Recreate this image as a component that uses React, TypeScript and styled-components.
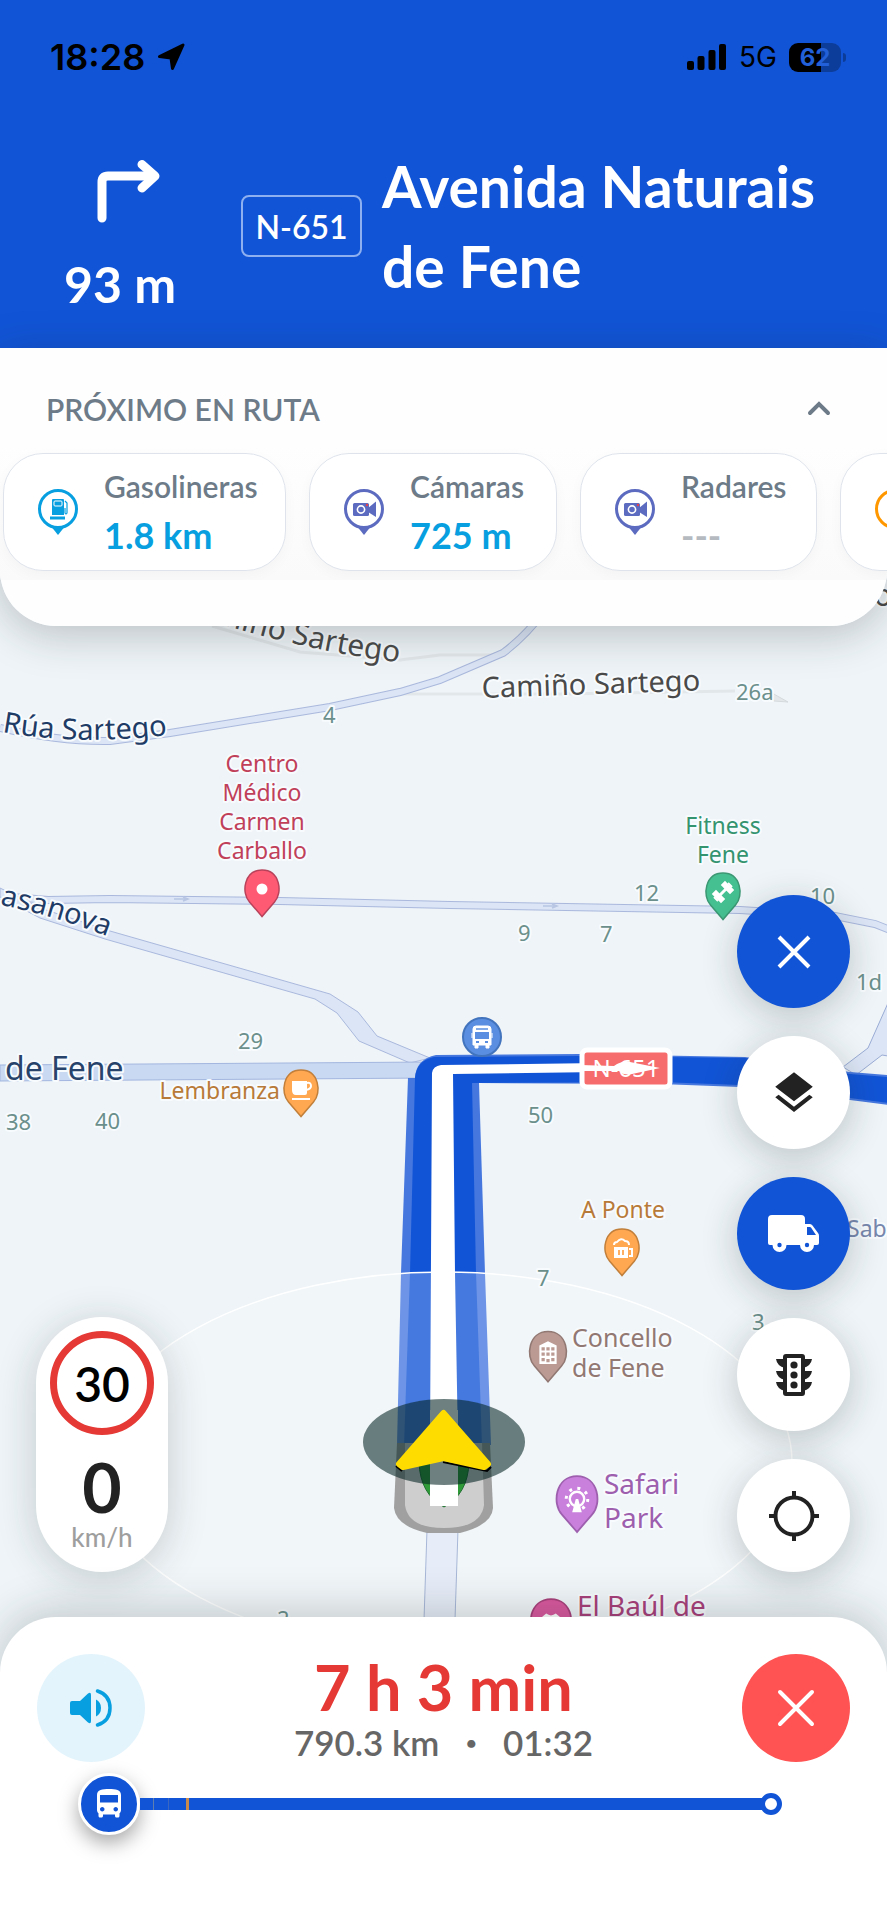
import React from "react";
import styled, { createGlobalStyle, css } from "styled-components";
import { MdDirectionsBus, MdLayers } from "react-icons/md";

const BLUE = "#1154d6";
const UI = `Lato, "Liberation Sans", sans-serif`;
const MAP = `"Noto Sans", "Open Sans", sans-serif`;

const Global = createGlobalStyle`
  *, *::before, *::after { box-sizing: border-box; }
  body { margin: 0; background: #fff; font-family: ${UI}; }
  button { font: inherit; border: 0; padding: 0; cursor: pointer; }
  h1, h2, p, ul { margin: 0; padding: 0; }
`;

const Page = styled.main`
  display: flex;
  flex-direction: column;
  min-height: 100vh;
  overflow: hidden;
`;

/* ---------- top ---------- */

const Top = styled.div`
  position: relative;
  z-index: 2;
`;

const Header = styled.header`
  background: ${BLUE};
  color: #fff;
  padding: 36px 46px 42px 50px;
`;

const StatusBar = styled.div`
  display: flex;
  align-items: center;
  justify-content: space-between;
  height: 42px;
  color: #000;
  font-family: Inter, sans-serif;
`;

const StatusGroup = styled.div`
  display: flex;
  align-items: center;
  gap: 12px;
`;

const Clock = styled.time`
  font-size: 36px;
  font-weight: 600;
`;

const Network = styled.span`
  font-size: 28px;
`;

const Battery = styled.span`
  position: relative;
  display: grid;
  place-items: center;
  width: 52px;
  height: 29px;
  border-radius: 9px;
  background: linear-gradient(90deg, #000 62%, rgba(0, 0, 0, 0.28) 62%);
  color: #2160d8;
  font-size: 24px;
  font-weight: 700;
  line-height: 29px;
  &::after {
    content: "";
    position: absolute;
    right: -5px;
    top: 10px;
    width: 3px;
    height: 9px;
    border-radius: 0 3px 3px 0;
    background: rgba(0, 0, 0, 0.28);
  }
`;

const Maneuver = styled.div`
  display: flex;
  align-items: center;
  margin-top: 68px;
  height: 160px;
`;

const Turn = styled.div`
  display: flex;
  flex-direction: column;
  align-items: center;
  gap: 24px;
  width: 140px;
  flex: none;
  padding-top: 28px;
`;

const TurnDistance = styled.span`
  font-size: 50px;
  font-weight: 700;
  line-height: 72px;
`;

const RoadBadge = styled.span`
  display: grid;
  place-items: center;
  flex: none;
  width: 121px;
  height: 62px;
  margin: 0 20px 0 51px;
  border: 2px solid #8fb0f0;
  border-radius: 8px;
  font-size: 32px;
  font-weight: 600;
`;

const Street = styled.h1`
  font-size: 57px;
  font-weight: 700;
  line-height: 80px;
`;

const RoutePanel = styled.section`
  height: 278px;
  overflow: hidden;
  background: #fefefe;
  border-radius: 0 0 56px 56px;
`;

const PanelShadow = styled.div`
  border-radius: 0 0 56px 56px;
  box-shadow: 0 8px 44px rgba(30, 40, 40, 0.26);
`;

const PanelHead = styled.div`
  display: flex;
  align-items: center;
  justify-content: space-between;
  height: 98px;
  padding: 24px 46px 0;
`;

const PanelTitle = styled.h2`
  color: #6d7b88;
  font-size: 30px;
  font-weight: 600;
`;

const Collapse = styled.button`
  display: grid;
  place-items: center;
  width: 44px;
  height: 44px;
  background: none;
`;

const Cards = styled.ul`
  display: flex;
  gap: 23px;
  padding: 7px 0 9px 3px;
  background: linear-gradient(#fefefe, #fafafa);
  overflow: hidden;
  list-style: none;
`;

const Card = styled.li<{ $width: number }>`
  display: flex;
  align-items: center;
  gap: 25px;
  flex: 0 0 ${(p) => p.$width}px;
  height: 118px;
  padding-left: 33px;
  background: #fff;
  border: 1px solid #dfe4ec;
  border-radius: 40px;
  box-shadow: 0 4px 14px rgba(0, 0, 0, 0.03);
`;

const CardText = styled.div`
  display: flex;
  flex-direction: column;
`;

const CardLabel = styled.span`
  color: #6d7b88;
  font-size: 30px;
  font-weight: 600;
  line-height: 46px;
`;

const CardValue = styled.span<{ $empty?: boolean }>`
  color: ${(p) => (p.$empty ? "#b4babf" : "#079fe0")};
  font-size: 36px;
  font-weight: 700;
  line-height: 52px;
`;

/* ---------- map ---------- */

const MapArea = styled.section`
  position: relative;
  flex: 1;
  min-height: 960px;
  margin: -60px 0;
  background: #eef4f8;
`;

const MapSvg = styled.svg`
  position: absolute;
  inset: 0;
  width: 100%;
  height: 100%;
  font-family: ${MAP};
`;

const Overlay = styled.div`
  position: absolute;
  inset: 0;
  display: flex;
  align-items: flex-end;
  justify-content: space-between;
  padding: 0 37px 105px 36px;
`;

const SpeedPill = styled.div`
  display: flex;
  flex-direction: column;
  align-items: center;
  width: 132px;
  height: 255px;
  padding-top: 14px;
  border-radius: 66px;
  background: #fff;
  box-shadow: 0 6px 40px rgba(30, 40, 40, 0.2);
`;

const SpeedLimit = styled.div`
  display: grid;
  place-items: center;
  width: 104px;
  height: 104px;
  border: 7px solid #e53935;
  border-radius: 50%;
  color: #000;
  font-size: 48px;
  font-weight: 600;
`;

const Speed = styled.div`
  color: #222;
  font-size: 68px;
  font-weight: 700;
  line-height: 68px;
  margin-top: 18px;
`;

const SpeedUnit = styled.div`
  color: #9e9e9e;
  font-size: 26px;
  font-weight: 500;
  line-height: 32px;
`;

const Tools = styled.div`
  display: flex;
  flex-direction: column;
  gap: 28px;
`;

const roundButton = css`
  display: grid;
  place-items: center;
  flex: none;
  border-radius: 50%;
`;

const Tool = styled.button<{ $active?: boolean }>`
  ${roundButton}
  width: 113px;
  height: 113px;
  background: ${(p) => (p.$active ? BLUE : "#fff")};
  color: ${(p) => (p.$active ? "#fff" : "#222")};
  box-shadow: 0 8px 36px rgba(30, 40, 40, 0.24);
`;

/* ---------- bottom sheet ---------- */

const Sheet = styled.footer`
  position: relative;
  z-index: 2;
  height: 303px;
  padding: 36px 37px 0;
  background: #fff;
  border-radius: 56px 56px 0 0;
  box-shadow: 0 -6px 44px rgba(30, 40, 40, 0.22);
`;

const Summary = styled.div`
  display: flex;
  align-items: center;
  justify-content: space-between;
`;

const SheetButton = styled.button<{ $danger?: boolean }>`
  ${roundButton}
  width: 108px;
  height: 108px;
  background: ${(p) => (p.$danger ? "#ff5252" : "#e4f4fc")};
  color: ${(p) => (p.$danger ? "#fff" : "#089fe0")};
`;

const Eta = styled.div`
  text-align: center;
`;

const Duration = styled.p`
  color: #e53935;
  font-size: 63px;
  font-weight: 700;
  line-height: 68px;
`;

const Details = styled.p`
  display: flex;
  align-items: center;
  justify-content: center;
  gap: 26px;
  color: #666;
  font-size: 35px;
  font-weight: 600;
  line-height: 42px;
`;

const Bullet = styled.span`
  font-size: 20px;
`;

const Progress = styled.div`
  display: flex;
  align-items: center;
  padding: 0 68px 0 41px;
  margin-top: 10px;
`;

const Vehicle = styled.span`
  ${roundButton}
  width: 62px;
  height: 62px;
  border: 3px solid #fff;
  background: ${BLUE};
  color: #fff;
  box-shadow: 0 8px 20px rgba(0, 0, 0, 0.35);
`;

const Track = styled.span`
  display: flex;
  flex: 1;
  height: 12px;
  margin-right: -2px;
  background: ${BLUE};
`;

const Tick = styled.span<{ $gap: number; $color: string; $w: number }>`
  width: ${(p) => p.$w}px;
  margin-left: ${(p) => p.$gap}px;
  background: ${(p) => p.$color};
`;

const Finish = styled.span`
  width: 22px;
  height: 22px;
  border: 5px solid ${BLUE};
  border-radius: 50%;
  background: #fff;
`;

/* ---------- icons ---------- */

const PinFrame = ({ color, children }: { color: string; children?: React.ReactNode }) => (
  <svg width="42" height="48" viewBox="0 0 42 48" fill="none" aria-hidden="true">
    <path d="M13 37 L21 47 L29 37 Z" fill={color} />
    <circle cx="21" cy="21" r="18.500" fill="#fff" stroke={color} strokeWidth="3" />
    {children}
  </svg>
);

const FuelIcon = () => (
  <PinFrame color="#079fe0">
    <path d="M15 12 q0 -1 1 -1 h10 q1 0 1 1 v15 h-12 z" fill="#079fe0" />
    <rect x="17" y="13" width="8" height="5" rx="1" stroke="#fff" strokeWidth="1" />
    <rect x="13" y="28.500" width="15" height="3" fill="#079fe0" />
    <path d="M28 13 l2 2 v10 q-1 2 -2 0 v-5" stroke="#079fe0" strokeWidth="1.200" />
  </PinFrame>
);

const CameraIcon = () => (
  <PinFrame color="#5c6bc0">
    <rect x="10" y="15" width="16" height="13" rx="1.500" fill="#5c6bc0" />
    <path d="M25 20 L33 13.500 V29 L25 24 Z" fill="#5c6bc0" />
    <circle cx="18" cy="21.500" r="3.600" stroke="#fff" strokeWidth="1.600" />
    <circle cx="24" cy="17" r="1.200" fill="#e5434f" />
  </PinFrame>
);

const AlertIcon = () => <PinFrame color="#ff9800" />;

const LocationArrow = () => (
  <svg width="28" height="28" viewBox="0 0 28 28" aria-hidden="true">
    <path d="M26 2 L15.500 25.500 L14 15 L2.500 13.500 Z" fill="#000" stroke="#000" strokeWidth="3" strokeLinejoin="round" />
  </svg>
);

const SignalIcon = () => (
  <svg width="40" height="27" viewBox="0 0 40 27" aria-hidden="true">
    <rect x="0" y="17" width="7" height="9" rx="2" />
    <rect x="10.500" y="12" width="7" height="14" rx="2" />
    <rect x="21.500" y="6" width="7" height="20" rx="2" />
    <rect x="32" y="0" width="7" height="26" rx="2" />
  </svg>
);

const TurnIcon = () => (
  <svg width="82" height="64" viewBox="-16 0 82 64" fill="none" stroke="#fff" strokeWidth="9" strokeLinecap="round" aria-hidden="true">
    <path d="M7 58 V22 Q7 16 13 16 H57" />
    <path d="M47 4.500 L60 16 L47 28" strokeLinejoin="round" />
  </svg>
);

const CrossIcon = ({ round }: { round?: boolean }) => (
  <svg width="40" height="40" viewBox="0 0 40 40" stroke="currentColor" strokeWidth="4" strokeLinecap={round ? "round" : "butt"} aria-hidden="true">
    <path d={round ? "M4 4 L36 36 M36 4 L4 36" : "M5 5 L35 35 M35 5 L5 35"} />
  </svg>
);

const TruckIcon = () => (
  <svg width="52" height="38" viewBox="0 0 52 38" fill="currentColor" aria-hidden="true">
    <path
      fillRule="evenodd"
      d="M4 0 H33 Q37 0 37 4 V9 H42 Q43.500 9 44.500 10.500 L50 18 Q51 19 51 21 V28 Q51 30 49 30 H46 A7 7 0 0 1 32 30 H18.500 A7 7 0 0 1 4.500 30 H2 Q0 30 0 28 V4 Q0 0 4 0 Z M39 12 V20 H48 L43 12.500 Q42.500 12 42 12 Z"
    />
    <circle cx="11.500" cy="30" r="2.200" fill={BLUE} />
    <circle cx="39" cy="30" r="2.200" fill={BLUE} />
  </svg>
);

const TrafficIcon = () => (
  <svg width="38" height="42" viewBox="0 0 38 42" fill="currentColor" aria-hidden="true">
    <path d="M1 5 H10 V14 Q2 12 1 5 Z M1 17 H10 V26 Q2 24 1 17 Z M1 28 H10 V37 Q2 35 1 28 Z" />
    <path d="M37 5 H28 V14 Q36 12 37 5 Z M37 17 H28 V26 Q36 24 37 17 Z M37 28 H28 V37 Q36 35 37 28 Z" />
    <rect x="10" y="2" width="18" height="38" rx="1" fill="#fff" stroke="currentColor" strokeWidth="4" />
    <circle cx="19" cy="11" r="3.600" />
    <circle cx="19" cy="21" r="3.600" />
    <circle cx="19" cy="31" r="3.600" />
  </svg>
);

const LocateIcon = () => (
  <svg width="52" height="52" viewBox="0 0 52 52" fill="none" stroke="currentColor" strokeWidth="4" aria-hidden="true">
    <circle cx="26" cy="26" r="18.500" />
    <path d="M26 1 V8 M26 44 V51 M1 26 H8 M44 26 H51" />
  </svg>
);

const VolumeIcon = () => (
  <svg width="44" height="40" viewBox="0 0 44 40" fill="currentColor" aria-hidden="true">
    <path d="M3 13 H11 L19 5.500 Q22 3.500 22 7 V33 Q22 36.500 19 34.500 L11 27 H3 Q1 27 1 25 V15 Q1 13 3 13 Z" />
    <path d="M27 11.500 Q32 14 32 20 Q32 26 27 28.500 Z" />
    <path d="M28.500 3 Q41 7 41 20 Q41 33 28.500 37" fill="none" stroke="currentColor" strokeWidth="3.500" strokeLinecap="round" />
  </svg>
);

/* ---------- map drawing ---------- */

type PinProps = { x: number; y: number; fill: string; stroke: string; scale?: number; children?: React.ReactNode };

const MapPin = ({ x, y, fill, stroke, scale = 1, children }: PinProps) => (
  <g transform={`translate(${x} ${y}) scale(${scale})`}>
    <path d="M0 27.500 L-12.500 13 C-21 4 -18 -19 0 -19 C18 -19 21 4 12.500 13 Z" fill={fill} stroke={stroke} strokeWidth="1.500" />
    {children}
  </g>
);

const Label = styled.text<{ $size: number; $color: string }>`
  font-size: ${(p) => p.$size}px;
  fill: ${(p) => p.$color};
  stroke: #f8fbfd;
  stroke-width: 4px;
  stroke-linejoin: round;
  paint-order: stroke;
`;

const HOUSE_NUMBERS: [number, number, string][] = [
  [323, 723, "4"],
  [736, 700, "26a"],
  [634, 901, "12"],
  [518, 941, "9"],
  [600, 942, "7"],
  [810, 904, "10"],
  [856, 990, "1d"],
  [238, 1049, "29"],
  [6, 1130, "38"],
  [95, 1129, "40"],
  [528, 1123, "50"],
  [537, 1286, "7"],
  [752, 1330, "3"],
  [277, 1627, "2"],
];

type Place = { x: number; y: number; lines: string[]; step: number; size: number; color: string; anchor?: "start" | "middle" | "end" };

const PLACES: Place[] = [
  { x: 262, y: 772, lines: ["Centro", "Médico", "Carmen", "Carballo"], step: 29, size: 23, color: "#c0405a", anchor: "middle" },
  { x: 723, y: 834, lines: ["Fitness", "Fene"], step: 29, size: 23, color: "#349470", anchor: "middle" },
  { x: 280, y: 1099, lines: ["Lembranza"], step: 29, size: 23, color: "#b87a38", anchor: "end" },
  { x: 623, y: 1218, lines: ["A Ponte"], step: 29, size: 23, color: "#b87a38", anchor: "middle" },
  { x: 572, y: 1347, lines: ["Concello", "de Fene"], step: 30, size: 25, color: "#927872" },
  { x: 604, y: 1494, lines: ["Safari", "Park"], step: 34, size: 28, color: "#9d5fae" },
  { x: 577, y: 1616, lines: ["El Baúl de"], step: 34, size: 28, color: "#a83f7b" },
  { x: 847, y: 1237, lines: ["Sab"], step: 29, size: 23, color: "#7787ad" },
];

const MapDrawing = () => (
  <MapSvg viewBox="0 566 887 1111" preserveAspectRatio="xMidYMid slice" role="img" aria-label="Mapa de Fene">
    <defs>
      <path id="lane-north" d="M179 611 Q243 632 300 645 T415 664" />
      <path id="lane-sartego" d="M2 732 Q85 747 182 733" />
      <path id="lane-casanova" d="M0 905 Q50 914 120 941" />
    </defs>

    {/* minor lanes */}
    <g fill="none" stroke="#e2e7ea" strokeWidth="3">
      <path d="M212 626 L300 652 L400 660 L440 655 H502" />
      <path d="M400 694 H560 L735 691" />
    </g>
    <path d="M772 693 L788 702 L774 701 Z" fill="#e3e7ea" stroke="#d5dadd" strokeWidth="1" />

    {/* local roads: an outline stroke below a slightly thinner fill */}
    {[
      ["#aab8dd", 8],
      ["#dbe5f5", 6],
    ].map(([stroke, width]) => (
      <g key={stroke} fill="none" stroke={stroke as string} strokeWidth={width}>
        <path d="M0 728 Q60 742 110 741 L170 733 L330 707 L400 692 L440 680 L503 653 Q526 636 545 610" />
        <path d="M0 896 L48 900 L110 899 L280 901 L450 905 L740 910 L835 916 L875 924 L890 930" />
      </g>
    ))}
    <path
      d="M0 888 L43 909 L110 931 L330 994 L358 1012 L377 1036 L430 1058 L410 1063 L359 1041 L337 1013 L315 999 L105 939 L40 918 L0 897 Z"
      fill="#dbe5f5"
      stroke="#aab8dd"
      strokeWidth="1"
    />
    <path d="M0 1065 L430 1062 V1078 L0 1081 Z" fill="#c9d9f1" stroke="#a3b6df" strokeWidth="1" />
    <path d="M843 1067 L868 1048 L888 1003 V1056 L882 1055 L856 1075 Z" fill="#dbe5f5" stroke="#9aabd4" strokeWidth="1" />
    <path d="M174 899 h14 m-5 -2 l5 2 l-5 2 M543 906 h14 m-5 -2 l5 2 l-5 2" fill="none" stroke="#b9c6e3" strokeWidth="1.500" />

    {/* road behind the vehicle */}
    <path d="M428 1500 L422 1680 H453 L459 1500 Z" fill="#e0e8f6" stroke="#8fa3cc" strokeWidth="1" />

    {/* active route */}
    <path d="M397 1445 L401 1273 L408 1078 L415 1078 Q416 1059 436 1055 L580 1054 L745 1057 L850 1072 L888 1075 V1105 L850 1100 L740 1087 L660 1084 L479 1083 L485 1273 L491 1445 Z" fill="#4577df" />
    <path d="M404 1445 L410 1273 L415 1078 Q416 1061 434 1057 L580 1056 L745 1058 L850 1074 L888 1077 V1103 L850 1098 L740 1085 L660 1082 L472 1083 L476 1273 L482 1445 Z" fill={BLUE} />
    <path d="M430 1445 L432 1073 Q433 1066 441 1065 L600 1063 V1072 L453 1074 L455 1273 L458 1445 Z" fill="#fff" />

    {/* accuracy area */}
    <ellipse cx="444" cy="1462" rx="348" ry="190" fill="#fff" fillOpacity="0.22" stroke="#fff" strokeWidth="1.500" />

    {/* travelled part of the route */}
    <path d="M397 1443 L394 1508 Q396 1526 427 1533 L460 1533 Q492 1525 493 1508 L490 1443 Z" fill="#a0a0a0" />
    <path d="M405 1443 L405 1505 Q408 1528 444 1528 Q481 1528 484 1505 L482 1443 Z" fill="#cecece" />
    <path d="M419 1462 Q420 1494 444 1507 Q468 1494 469 1462 Z" fill="#2f9a38" stroke="#1f7030" strokeWidth="1" />
    <rect x="430" y="1410" width="28" height="96" fill="#fff" />
    <ellipse cx="444" cy="1442" rx="81" ry="43" fill="#00221f" fillOpacity="0.570" />
    <path d="M443 1462 L487 1471 L491 1467 M396 1466 L402 1471" fill="none" stroke="#000" strokeWidth="2" />
    <path d="M443.500 1413 L399 1464 L403 1467 L443.500 1458 L484 1467 L488 1464 Z" fill="#ffdc00" stroke="#ffdc00" strokeWidth="6" strokeLinejoin="round" />

    {/* house numbers and street names */}
    {HOUSE_NUMBERS.map(([x, y, n]) => (
      <Label key={`${x}-${y}`} x={x} y={y} $size={22} $color="#6b908c">
        {n}
      </Label>
    ))}
    <Label $size={30} $color="#4a4a4a">
      <textPath href="#lane-north">Camiño Sartego</textPath>
    </Label>
    <Label $size={29} $color="#4a4a4a" transform="translate(482 698) rotate(-2)">
      Camiño Sartego
    </Label>
    <Label $size={30} $color="#4a4a4a" x="874" y="606">
      o
    </Label>
    <Label $size={29} $color="#1f3c66">
      <textPath href="#lane-sartego">Rúa Sartego</textPath>
    </Label>
    <Label $size={29} $color="#1f3c66">
      <textPath href="#lane-casanova">asanova</textPath>
    </Label>
    <Label $size={32} $color="#27436b" x="5" y="1080">
      de Fene
    </Label>

    {/* road number shield */}
    <rect x="582" y="1050" width="88" height="37" rx="5" fill="#f66b6b" stroke="#fff" strokeWidth="5" />
    <text x="626" y="1077" textAnchor="middle" fontSize="24" fill="#fff">
      N-651
    </text>
    <path d="M580 1065 L614 1066 Q622 1060 630 1062 L660 1068 L632 1074 Q624 1076 619 1071 L580 1071 Z" fill="#fff" />

    {/* points of interest */}
    <MapPin x={262} y={889} fill="#ff5a74" stroke="#b8425a">
      <circle r="5.500" fill="#fff" />
    </MapPin>
    <MapPin x={723} y={892} fill="#45c090" stroke="#3b9873">
      <path d="M-5 5 L5 -5" stroke="#fff" strokeWidth="3" />
      <path d="M-7 2 L-2 7 M2 -7 L7 -2" stroke="#fff" strokeWidth="6" strokeLinecap="square" />
      <path d="M-9 5 L-5 9 M5 -9 L9 -5" stroke="#fff" strokeWidth="2" />
    </MapPin>
    <MapPin x={301} y={1089} fill="#ffa751" stroke="#c17f3a">
      <path d="M-9 -8 H6 V4 Q6 6 4 6 H-5 Q-9 6 -9 1 Z M-9 9 H9 V11 H-9 Z" fill="#fff" />
      <path d="M6 -6 Q10 -7 10 -3 Q10 0 5 1" fill="none" stroke="#fff" strokeWidth="2" />
    </MapPin>
    <MapPin x={622} y={1248} fill="#ffa751" stroke="#c17f3a">
      <path d="M-8 -1 H6 V10 H-8 Z" fill="#fff" />
      <path d="M-3 2 V7 M1 2 V7" stroke="#ffa751" strokeWidth="1.800" />
      <path d="M7 1 H10 V8 H7 M-8 -3 Q-8 -6 -5 -6 Q-1 -11 3 -7 Q7 -7 7 -3" fill="none" stroke="#fff" strokeWidth="2" />
    </MapPin>
    <MapPin x={548} y={1352} fill="#bb9a94" stroke="#927872" scale={1.08}>
      <path d="M-8 11 V-6 L0 -10 L8 -6 V11 Z" fill="#fff" />
      <path d="M-6 -3 H-3 M-1.500 -3 H1.500 M3 -3 H6 M-6 2 H-3 M-1.500 2 H1.500 M3 2 H6 M-6 7 H-3 M-1.500 8 H1.500 M3 7 H6" stroke="#bb9a94" strokeWidth="3" />
    </MapPin>
    <MapPin x={577} y={1499} fill="#c97fdc" stroke="#9d5fae" scale={1.2}>
      <circle r="6" fill="none" stroke="#fff" strokeWidth="2" />
      <circle r="9" fill="none" stroke="#fff" strokeWidth="2.500" strokeDasharray="2.500 4.568" />
      <path d="M-1 0 H1 L4 11 H-4 Z" fill="#fff" />
    </MapPin>
    <MapPin x={551} y={1622} fill="#d9589e" stroke="#a83f7b" scale={1.2}>
      <path d="M-9 -3 L-4 -7 Q0 -4 4 -7 L9 -3 L6 1 V10 H-6 V1 Z" fill="#fff" />
    </MapPin>
    <circle cx="482" cy="1037" r="19" fill="#5a8ee0" stroke="#4273bd" strokeWidth="2" />
    <g transform="translate(482 1037)">
      <path d="M-9 -8 Q-9 -11 -6 -11 H6 Q9 -11 9 -8 V8 H7 V11 H4 V8 H-4 V11 H-7 V8 H-9 Z M-10 -4 V1 M10 -4 V1" fill="#fff" stroke="#fff" strokeWidth="1" />
      <path d="M-6 -8 H6" stroke="#5a8ee0" strokeWidth="1.500" />
      <rect x="-7" y="-5" width="14" height="7" fill="#5a8ee0" />
      <rect x="-6" y="4" width="3" height="2" fill="#5a8ee0" />
      <rect x="3" y="4" width="3" height="2" fill="#5a8ee0" />
    </g>
    {PLACES.map((p) => (
      <Label key={p.lines[0]} $size={p.size} $color={p.color} textAnchor={p.anchor}>
        {p.lines.map((line, i) => (
          <tspan key={line} x={p.x} y={p.y + i * p.step}>
            {line}
          </tspan>
        ))}
      </Label>
    ))}
  </MapSvg>
);

const STOPS = [
  { label: "Gasolineras", value: "1.8 km", width: 283, icon: <FuelIcon /> },
  { label: "Cámaras", value: "725 m", width: 248, icon: <CameraIcon /> },
  { label: "Radares", value: "---", width: 237, icon: <CameraIcon />, empty: true },
  { label: "", value: "", width: 240, icon: <AlertIcon /> },
];

export default function App() {
  return (
    <Page>
      <Global />
      <Top>
        <Header>
          <StatusBar>
            <StatusGroup>
              <Clock>18:28</Clock>
              <LocationArrow />
            </StatusGroup>
            <StatusGroup>
              <SignalIcon />
              <Network>5G</Network>
              <Battery>62</Battery>
            </StatusGroup>
          </StatusBar>
          <Maneuver>
            <Turn>
              <TurnIcon />
              <TurnDistance>93 m</TurnDistance>
            </Turn>
            <RoadBadge>N-651</RoadBadge>
            <Street>Avenida Naturais de Fene</Street>
          </Maneuver>
        </Header>
        <PanelShadow>
          <RoutePanel>
            <PanelHead>
              <PanelTitle>PRÓXIMO EN RUTA</PanelTitle>
              <Collapse aria-label="Contraer">
                <svg width="24" height="16" viewBox="0 0 24 16" fill="none" stroke="#6d7b88" strokeWidth="4" strokeLinecap="round">
                  <path d="M3 12 L12 3 L21 12" />
                </svg>
              </Collapse>
            </PanelHead>
            <Cards>
              {STOPS.map((s, i) => (
                <Card key={i} $width={s.width}>
                  {s.icon}
                  <CardText>
                    <CardLabel>{s.label}</CardLabel>
                    <CardValue $empty={s.empty}>{s.value}</CardValue>
                  </CardText>
                </Card>
              ))}
            </Cards>
          </RoutePanel>
        </PanelShadow>
      </Top>

      <MapArea>
        <MapDrawing />
        <Overlay>
          <SpeedPill>
            <SpeedLimit>30</SpeedLimit>
            <Speed>0</Speed>
            <SpeedUnit>km/h</SpeedUnit>
          </SpeedPill>
          <Tools>
            <Tool $active aria-label="Cerrar menú">
              <CrossIcon />
            </Tool>
            <Tool aria-label="Capas">
              <MdLayers size={50} />
            </Tool>
            <Tool $active aria-label="Camión">
              <TruckIcon />
            </Tool>
            <Tool aria-label="Tráfico">
              <TrafficIcon />
            </Tool>
            <Tool aria-label="Centrar">
              <LocateIcon />
            </Tool>
          </Tools>
        </Overlay>
      </MapArea>

      <Sheet>
        <Summary>
          <SheetButton aria-label="Sonido">
            <VolumeIcon />
          </SheetButton>
          <Eta>
            <Duration>7 h 3 min</Duration>
            <Details>
              <span>790.3 km</span>
              <Bullet>•</Bullet>
              <span>01:32</span>
            </Details>
          </Eta>
          <SheetButton $danger aria-label="Finalizar ruta">
            <CrossIcon round />
          </SheetButton>
        </Summary>
        <Progress>
          <Vehicle>
            <MdDirectionsBus size={36} />
          </Vehicle>
          <Track>
            <Tick $gap={13} $w={1} $color="#5f7fae" />
            <Tick $gap={14} $w={1} $color="#3c67c0" />
            <Tick $gap={17} $w={3} $color="#c98a4a" />
          </Track>
          <Finish />
        </Progress>
      </Sheet>
    </Page>
  );
}
